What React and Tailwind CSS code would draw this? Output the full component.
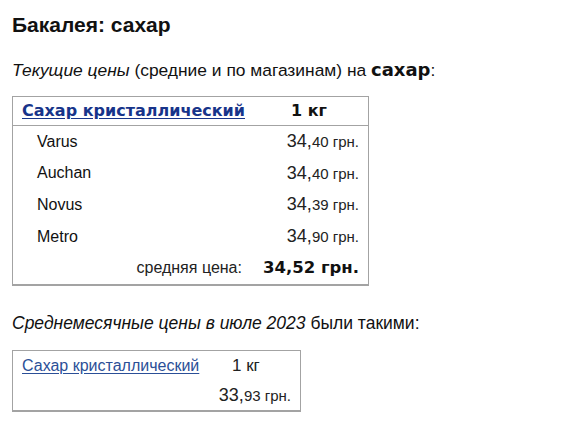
const shops = [
  { name: 'Varus', whole: '34', frac: '40' },
  { name: 'Auchan', whole: '34', frac: '40' },
  { name: 'Novus', whole: '34', frac: '39' },
  { name: 'Metro', whole: '34', frac: '90' },
];

function Price({ whole, frac }) {
  return (
    <span className="text-[#222]">
      <span className="text-[18px]">{whole},</span>
      <span className="text-[15px]">{frac} грн.</span>
    </span>
  );
}

export default function App() {
  return (
    <div className="min-h-screen bg-white text-[#111] font-['Liberation_Sans',Arial,sans-serif] px-3 pt-[13px]">
      <h1 className="text-[21px] font-bold leading-6">Бакалея: сахар</h1>

      <p className="mt-[23px] text-[17.4px] leading-5">
        <i>Текущие цены</i> (средние и по магазинам) на{' '}
        <b className="font-['DejaVu_Sans',sans-serif] text-[18px]">сахар</b>:
      </p>

      <div className="mt-[16px] w-[357px] border border-[#a3a3a3] border-b-2">
        <div className="h-[29px] flex items-center border-b border-[#a3a3a3] font-['DejaVu_Sans',sans-serif] font-bold text-[16px]">
          <a href="#" className="pl-[9px] text-[#17348a] underline underline-offset-2 w-[245px]">Сахар кристаллический</a>
          <span className="flex-1 text-center pr-[8px]">1 кг</span>
        </div>
        {shops.map((s) => (
          <div key={s.name} className="h-[31.6px] flex items-center justify-between pl-6 pr-[9px] text-[16px]">
            <span>{s.name}</span>
            <Price whole={s.whole} frac={s.frac} />
          </div>
        ))}
        <div className="h-[31.6px] flex items-center justify-end pr-[9px]">
          <span className="text-[16px] text-[#222] mr-[21px]">средняя цена:</span>
          <span className="font-['DejaVu_Sans',sans-serif] font-bold text-[16.5px]">34,52 грн.</span>
        </div>
      </div>

      <p className="mt-[27px] text-[17.5px] leading-5">
        <i>Среднемесячные цены в июле 2023</i> были такими:
      </p>

      <div className="mt-[17px] w-[289px] border border-[#a3a3a3] border-b-2 text-[16px]">
        <div className="h-[30px] flex items-center">
          <a href="#" className="pl-[9px] text-[#2b4f97] underline underline-offset-2 w-[219px]">Сахар кристаллический</a>
          <span className="text-[#222] text-[17px]">1 кг</span>
        </div>
        <div className="h-[29px] flex items-center justify-end pr-[9px]">
          <Price whole="33" frac="93" />
        </div>
      </div>
    </div>
  );
}
